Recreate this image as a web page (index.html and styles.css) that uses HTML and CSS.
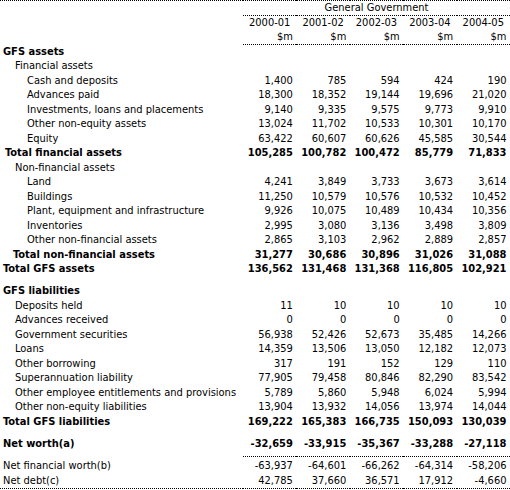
FILE: index.html
```html
<!DOCTYPE html>
<html>
<head>
<meta charset="utf-8">
<link rel="stylesheet" href="styles.css">
</head>
<body>
<table class="gfs">
  <colgroup>
    <col class="c-label"><col class="c-num"><col class="c-num"><col class="c-num"><col class="c-num"><col class="c-num">
  </colgroup>
  <thead>
    <tr class="h-group"><th></th><th colspan="5" class="grp">General Government</th></tr>
    <tr class="h-year"><th></th><th>2000-01</th><th>2001-02</th><th>2002-03</th><th>2003-04</th><th>2004-05</th></tr>
    <tr class="h-unit"><th></th><th>$m</th><th>$m</th><th>$m</th><th>$m</th><th>$m</th></tr>
  </thead>
  <tbody>
    <tr class="b"><td class="i0">GFS assets</td><td></td><td></td><td></td><td></td><td></td></tr>
    <tr><td class="i1">Financial assets</td><td></td><td></td><td></td><td></td><td></td></tr>
    <tr><td class="i2">Cash and deposits</td><td>1,400</td><td>785</td><td>594</td><td>424</td><td>190</td></tr>
    <tr><td class="i2">Advances paid</td><td>18,300</td><td>18,352</td><td>19,144</td><td>19,696</td><td>21,020</td></tr>
    <tr><td class="i2">Investments, loans and placements</td><td>9,140</td><td>9,335</td><td>9,575</td><td>9,773</td><td>9,910</td></tr>
    <tr><td class="i2">Other non-equity assets</td><td>13,024</td><td>11,702</td><td>10,533</td><td>10,301</td><td>10,170</td></tr>
    <tr><td class="i2">Equity</td><td>63,422</td><td>60,607</td><td>60,626</td><td>45,585</td><td>30,544</td></tr>
    <tr class="b"><td class="it1">Total financial assets</td><td>105,285</td><td>100,782</td><td>100,472</td><td>85,779</td><td>71,833</td></tr>
    <tr><td class="i1">Non-financial assets</td><td></td><td></td><td></td><td></td><td></td></tr>
    <tr><td class="i2">Land</td><td>4,241</td><td>3,849</td><td>3,733</td><td>3,673</td><td>3,614</td></tr>
    <tr><td class="i2">Buildings</td><td>11,250</td><td>10,579</td><td>10,576</td><td>10,532</td><td>10,452</td></tr>
    <tr><td class="i2">Plant, equipment and infrastructure</td><td>9,926</td><td>10,075</td><td>10,489</td><td>10,434</td><td>10,356</td></tr>
    <tr><td class="i2">Inventories</td><td>2,995</td><td>3,080</td><td>3,136</td><td>3,498</td><td>3,809</td></tr>
    <tr><td class="i2">Other non-financial assets</td><td>2,865</td><td>3,103</td><td>2,962</td><td>2,889</td><td>2,857</td></tr>
    <tr class="b"><td class="it2">Total non-financial assets</td><td>31,277</td><td>30,686</td><td>30,896</td><td>31,026</td><td>31,088</td></tr>
    <tr class="b"><td class="i0">Total GFS assets</td><td>136,562</td><td>131,468</td><td>131,368</td><td>116,805</td><td>102,921</td></tr>
    <tr class="gap"><td colspan="6"></td></tr>
    <tr class="b"><td class="i0">GFS liabilities</td><td></td><td></td><td></td><td></td><td></td></tr>
    <tr><td class="i1">Deposits held</td><td>11</td><td>10</td><td>10</td><td>10</td><td>10</td></tr>
    <tr><td class="i1">Advances received</td><td>0</td><td>0</td><td>0</td><td>0</td><td>0</td></tr>
    <tr><td class="i1">Government securities</td><td>56,938</td><td>52,426</td><td>52,673</td><td>35,485</td><td>14,266</td></tr>
    <tr><td class="i1">Loans</td><td>14,359</td><td>13,506</td><td>13,050</td><td>12,182</td><td>12,073</td></tr>
    <tr><td class="i1">Other borrowing</td><td>317</td><td>191</td><td>152</td><td>129</td><td>110</td></tr>
    <tr><td class="i1">Superannuation liability</td><td>77,905</td><td>79,458</td><td>80,846</td><td>82,290</td><td>83,542</td></tr>
    <tr><td class="i1">Other employee entitlements and provisions</td><td>5,789</td><td>5,860</td><td>5,948</td><td>6,024</td><td>5,994</td></tr>
    <tr><td class="i1">Other non-equity liabilities</td><td>13,904</td><td>13,932</td><td>14,056</td><td>13,974</td><td>14,044</td></tr>
    <tr class="b"><td class="i0">Total GFS liabilities</td><td>169,222</td><td>165,383</td><td>166,735</td><td>150,093</td><td>130,039</td></tr>
    <tr class="gap"><td colspan="6"></td></tr>
    <tr class="b net"><td class="i0">Net worth(a)</td><td>-32,659</td><td>-33,915</td><td>-35,367</td><td>-33,288</td><td>-27,118</td></tr>
    <tr class="gap-s"><td colspan="6"></td></tr>
    <tr><td class="i0">Net financial worth(b)</td><td>-63,937</td><td>-64,601</td><td>-66,262</td><td>-64,314</td><td>-58,206</td></tr>
    <tr><td class="i0">Net debt(c)</td><td>42,785</td><td>37,660</td><td>36,571</td><td>17,912</td><td>-4,660</td></tr>
  </tbody>
</table>
</body>
</html>
```
FILE: styles.css
```css
html, body {
  margin: 0;
  padding: 0;
  background: #ffffff;
}

body {
  font-family: "DejaVu Sans Condensed", "DejaVu Sans", sans-serif;
  font-stretch: condensed;
  font-size: 11px;
  color: #000000;
}

.gfs {
  width: 510px;
  border-collapse: collapse;
  table-layout: fixed;
  border-top: 1px dotted #000;
  border-bottom: 1px dotted #000;
}

.c-label { width: 243px; }

.gfs th, .gfs td {
  padding: 0;
  white-space: nowrap;
  font-weight: normal;
}

.gfs thead tr { height: 14px; line-height: 14px; }

.grp {
  text-align: center;
  border-bottom: 1px dotted #000;
}

.h-year th { text-align: center; }

.h-unit th { text-align: right; padding-right: 3.5px; }
.h-unit th:first-child { padding-right: 0; }
.h-unit th + th { border-bottom: 1px dotted #000; }

.gfs tbody tr { height: 14.5px; line-height: 14.5px; }

.gfs tbody td + td {
  text-align: right;
  padding-right: 3.5px;
}

.b td { font-weight: bold; }

.i0 { padding-left: 3px !important; }
.i1 { padding-left: 15px !important; }
.i2 { padding-left: 27px !important; }
.it1 { padding-left: 5px !important; }
.it2 { padding-left: 13px !important; }

.gfs tbody tr.gap { height: 7.5px; line-height: 0; }
.gfs tbody tr.gap-s { height: 2.5px; line-height: 0; }

.net td { padding-bottom: 5px; vertical-align: top; }
.net td + td { border-bottom: 1px dotted #000; }
```
